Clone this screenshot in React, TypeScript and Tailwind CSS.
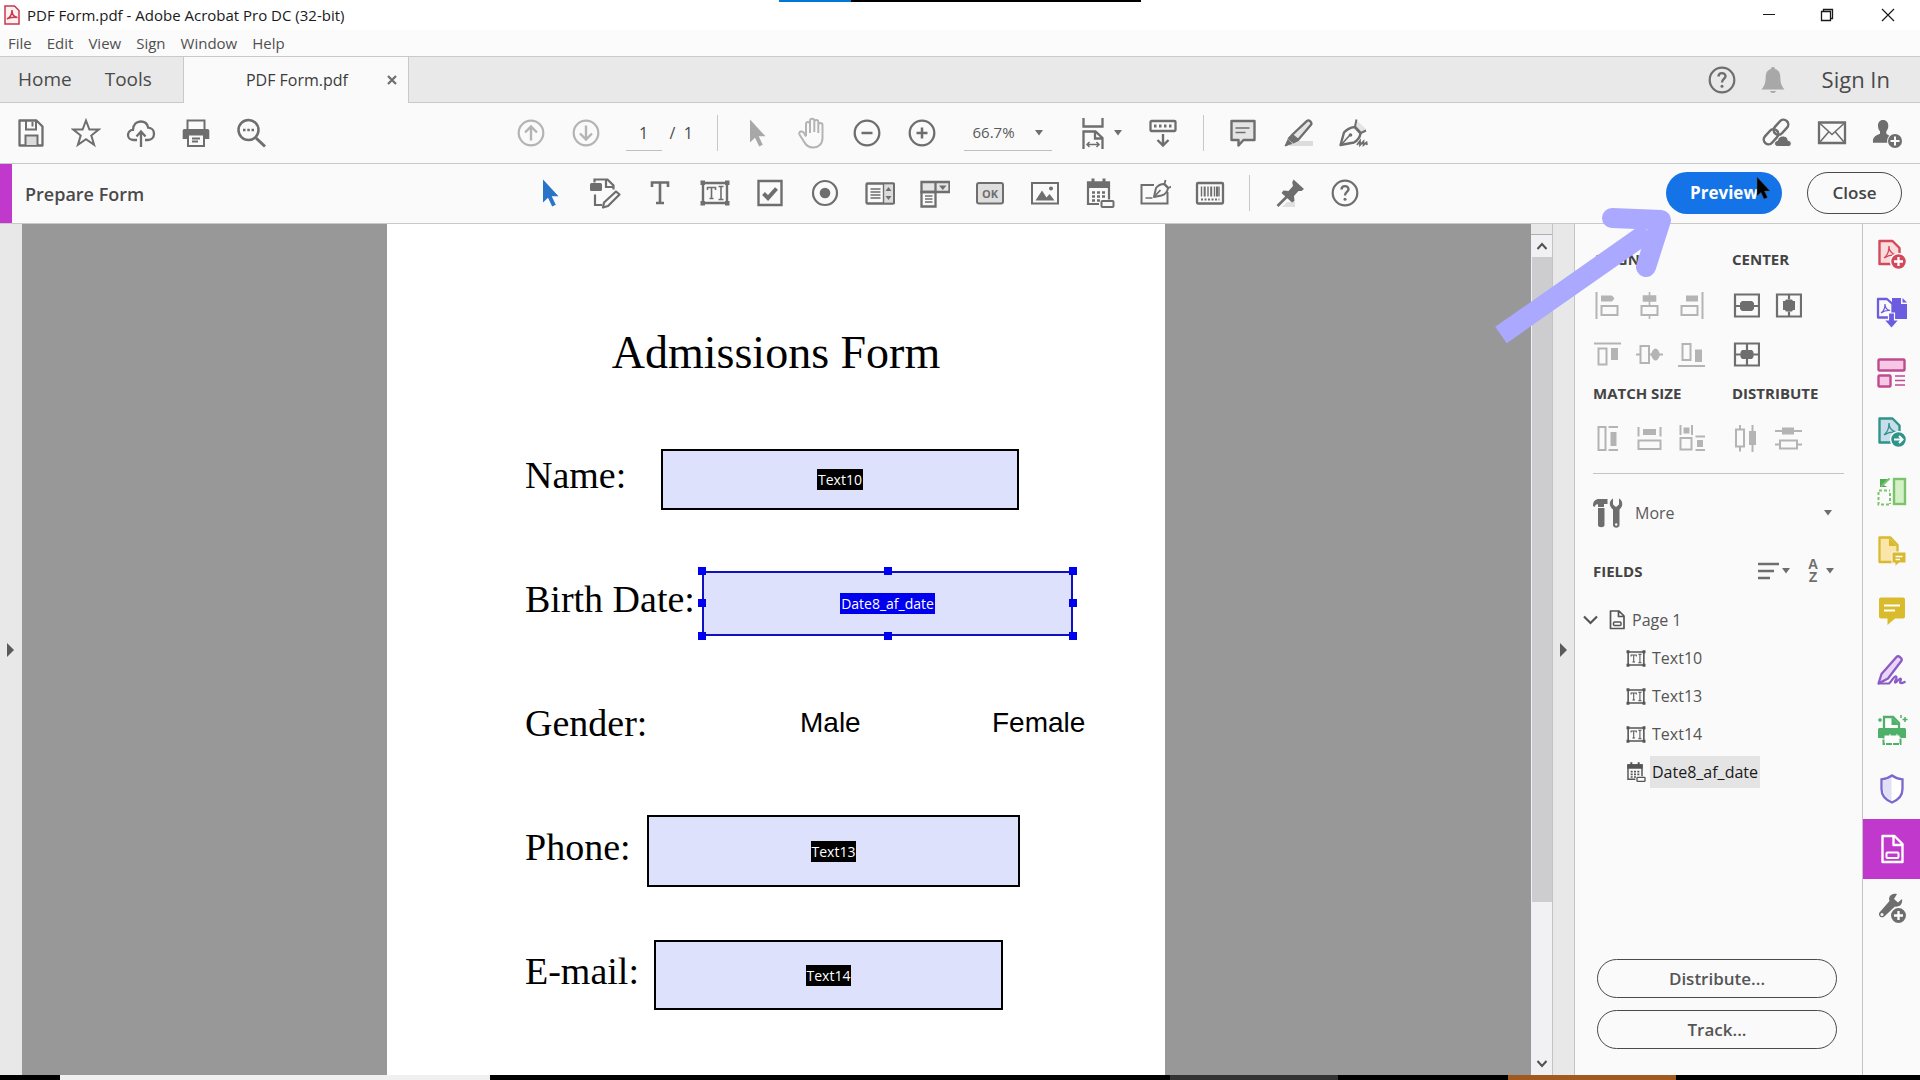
import React from 'react';

type SvgProps = { w?: number; h?: number; className?: string; children: React.ReactNode };

function Svg({ w = 30, h = 30, className = '', children }: SvgProps) {
  return (
    <svg
      width={w}
      height={h}
      viewBox={`0 0 ${w} ${h}`}
      fill="none"
      stroke="currentColor"
      strokeWidth={2}
      className={`shrink-0 ${className}`}
      aria-hidden="true"
    >
      {children}
    </svg>
  );
}

/* ---------- Main toolbar icons ---------- */

const SaveIcon = () => (
  <Svg>
    <path d="M3.500 2.500h17l6 6V27.500h-23z" strokeLinejoin="round" strokeWidth={2.300} />
    <path d="M10 2v9.500h10V2M16.500 4v4.500" />
    <path d="M9.500 27v-9.500h12V27" fill="#dcdcdc" />
  </Svg>
);

const StarIcon = () => (
  <Svg>
    <path d="M15 2.500l3.400 9h9.300l-7.400 6 2.800 9.300L15 21.200l-8.100 5.600 2.800-9.300-7.400-6h9.300z" />
  </Svg>
);

const CloudUpIcon = () => (
  <Svg>
    <path d="M11 22H7.500C4 22 2 19.700 2 17c0-2.800 2-5 5-5.200C7.300 6.500 10.500 3.500 14.700 3.500c4 0 6.800 2.500 7.500 6.200 3.500.2 5.800 2.700 5.800 6 0 3.600-2.500 6.300-6 6.300h-3" strokeWidth={2.300} />
    <path d="M15 29V14M10.500 18.500 15 13.500l4.500 5" strokeWidth={2.300} />
  </Svg>
);

const PrintIcon = () => (
  <Svg>
    <path d="M6.500 11V2.500h17V11" />
    <path d="M3.500 11h23c1 0 1.800.8 1.800 1.800V21h-5v-5H6.700v5h-5v-8.200c0-1 .8-1.800 1.800-1.800z" fill="currentColor" stroke="none" />
    <path d="M7 16.500h16V28H7zM11 20.500h8M11 23.500h6" />
  </Svg>
);

const SearchDotsIcon = () => (
  <Svg>
    <circle cx="12.500" cy="12" r="10" strokeWidth={2.500} />
    <path d="M20 20l9 8.500" strokeWidth={3} />
    <path d="M7 12h2.500M11.300 12h2.500M15.500 12H18" strokeWidth={2.500} />
  </Svg>
);

const PageUpIcon = () => (
  <Svg>
    <circle cx="15" cy="15" r="12.300" strokeWidth={2.200} />
    <path d="M15 22.500V8.500M9 14.500l6-6 6 6" strokeWidth={2.400} />
  </Svg>
);

const PageDownIcon = () => (
  <Svg>
    <circle cx="15" cy="15" r="12.300" strokeWidth={2.200} />
    <path d="M15 7.500v14M9 15.500l6 6 6-6" strokeWidth={2.400} />
  </Svg>
);

const ArrowCursorIcon = () => (
  <Svg>
    <path d="M8 1.500v23l5-4.800 4.200 8.800 3.600-1.700-4.100-8.500h6.800z" fill="currentColor" stroke="none" />
  </Svg>
);

const HandIcon = () => (
  <Svg w={32} h={34}>
    <path
      d="M10 20V8c0-2.800 4-2.800 4 0v9M14 16V5c0-3 4.300-3 4.300 0v11M18.300 16V6c0-2.800 4-2.800 4 0v11M22.300 17V9c0-2.800 4.200-2.800 4.200 0v13c0 6-4 9.500-9.300 9.500-5 0-7.300-2-9.300-6L3.500 18.500c-1.300-3 2.800-4.300 4.500-1.500l2 3.500"
      strokeLinejoin="round"
    />
  </Svg>
);

const ZoomOutIcon = () => (
  <Svg>
    <circle cx="15" cy="15" r="12.300" strokeWidth={2.300} />
    <path d="M9.500 15h11" strokeWidth={2.500} />
  </Svg>
);

const ZoomInIcon = () => (
  <Svg>
    <circle cx="15" cy="15" r="12.300" strokeWidth={2.300} />
    <path d="M9.500 15h11M15 9.500v11" strokeWidth={2.500} />
  </Svg>
);

const Caret = () => (
  <Svg w={8} h={6}>
    <path d="M0 0h8L4 5.500z" fill="currentColor" stroke="none" />
  </Svg>
);

const FitWidthIcon = () => (
  <Svg w={24} h={34}>
    <path d="M2.500 2v8.500h19V2M2.500 33V15.500h12l7 6.500v11M14 16v6.500h7.500" strokeWidth={2.300} />
    <path d="M6 28.500h12M8.500 26 6 28.500 8.500 31M15.500 26l2.500 2.500-2.500 2.500" strokeWidth={1.500} />
  </Svg>
);

const KeyboardDownIcon = () => (
  <Svg>
    <rect x="2.500" y="3" width="25" height="10" rx="1" strokeWidth={2.300} />
    <path d="M6 8h2.500M11 8h2.500M16 8h2.500M21 8h2.500" strokeWidth={3} />
    <path d="M15 16v11M9.500 22l5.500 5.500 5.500-5.500" strokeWidth={2.400} />
  </Svg>
);

const CommentIcon = () => (
  <Svg>
    <path d="M3.500 3h23v19H15.500l-5 5.500V22h-7z" fill="#e4e4e4" strokeWidth={2.400} strokeLinejoin="round" />
    <path d="M7.500 10h14M7.500 14.500h10" strokeWidth={1.600} />
  </Svg>
);

const HighlighterIcon = () => (
  <Svg>
    <path d="M12 23h18v5H6z" fill="#dcdcdc" stroke="none" />
    <path d="M9 17 24 2.800c2-1.500 5.500 1.500 4 4L15 22z" fill="#e4e4e4" strokeWidth={2.300} strokeLinejoin="round" />
    <path d="M7.500 17.500l7 5.500-4 2-5.500-4.500zM5 21.500l4 4L2 28z" fill="currentColor" stroke="currentColor" strokeWidth={1} />
  </Svg>
);

const FountainPenIcon = () => (
  <Svg>
    <path d="M2.500 27 6 14.500C9 11 12.500 9.500 16.500 9l6 6.500c-.7 4-3 7-6.500 9z" strokeWidth={2.400} strokeLinejoin="round" />
    <path d="M17 9l2.500-6 9 8.500-6 3.500z" fill="#e4e4e4" stroke="none" />
    <path d="M18.500 1.500 17 8.500l6 6.500 5-2.500" strokeWidth={2} />
    <path d="M3 27l8.500-9.500" strokeWidth={1.600} />
    <circle cx="12.500" cy="17" r="1.800" fill="currentColor" stroke="none" />
    <path d="M19 27l3-4v4l3.500-3.500V27l3-2.500.5 2.500" strokeWidth={1.800} />
  </Svg>
);

const LinkCloudIcon = () => (
  <Svg w={32}>
    <rect x="11.500" y="4.500" width="17" height="9.500" rx="4.700" transform="rotate(-48 20 9.300)" strokeWidth={2.500} />
    <rect x="1.500" y="14" width="17" height="9.500" rx="4.700" transform="rotate(-48 10 18.700)" strokeWidth={2.500} />
    <path d="M17 28.500c-4.500 0-4.500-5.500-.5-6 .5-3 3-4.800 6-4.500 3 .3 4.300 2 4.700 4.500 4 .3 4 6 0 6z" fill="currentColor" stroke="#fafafa" strokeWidth={1} />
  </Svg>
);

const MailIcon = () => (
  <Svg>
    <path d="M2 4.500h26v20.500H2z" strokeWidth={2.300} />
    <path d="M3 5.500l12 11 12-11M3 24l9-10.500M27 24l-9-10.500" strokeWidth={1.600} />
  </Svg>
);

const AddPersonIcon = () => (
  <Svg w={32}>
    <path d="M12 2c3.500 0 5.300 2.500 5.300 5.800 0 2.500-1 4.200-2 5.500v2.500l3 2c-2 2-2.500 4.500-2 7H2c-.5-5.500 2-7 7-9v-2.500c-1.200-1.300-2-3-2-5.500C7 4.500 8.600 2 12 2z" fill="currentColor" stroke="none" />
    <circle cx="24" cy="23" r="7" fill="currentColor" stroke="none" />
    <path d="M24 18.500v9M19.500 23h9" stroke="#fafafa" />
  </Svg>
);

const HelpIcon = () => (
  <Svg>
    <circle cx="15" cy="15" r="12.300" strokeWidth={2.200} />
    <path d="M11.500 11.500c0-4.500 7-4.500 7-.3 0 2.800-3.500 2.800-3.500 6.300" strokeWidth={2.400} />
    <circle cx="15" cy="21.300" r="1.500" fill="currentColor" stroke="none" />
  </Svg>
);

const BellIcon = () => (
  <Svg>
    <path d="M15 2c1.500 0 2 .8 2 2 4 1.200 5.200 4 5.300 8 .2 5 .7 8.500 4.200 12.500h-23C7 20.500 7.500 17 7.700 12c.1-4 1.300-6.800 5.300-8 0-1.200.5-2 2-2zM12 26h6c-.5 2.500-5.500 2.500-6 0z" fill="currentColor" stroke="none" />
  </Svg>
);

/* ---------- Form toolbar icons ---------- */

const EditFormIcon = () => (
  <Svg w={32} h={32}>
    <rect x="1" y="6" width="12" height="8" rx="1.500" fill="currentColor" stroke="none" />
    <path d="M5.500 5.500v-3h13l6 6v4M17 3v7h7M6 17.500V28h7" strokeWidth={2.200} />
    <path d="M15 25.500 27 14.500l3.500 3L19 29l-5 1.500z" strokeWidth={2.200} strokeLinejoin="round" />
  </Svg>
);

const TextIcon = () => (
  <Svg>
    <path d="M7 9V4.500h16V9M15 4.500v20M11 25h8" strokeWidth={2.600} />
  </Svg>
);

const TextFieldIcon = ({ small = false }: { small?: boolean }) => (
  <svg
    width={small ? 20 : 30}
    height={small ? 17 : 26}
    viewBox="0 0 30 26"
    fill="none"
    stroke="currentColor"
    strokeWidth={2}
    aria-hidden="true"
    className="shrink-0"
  >
    <path d="M3 3h24v20H3z" strokeWidth={2.400} />
    <path d="M.5.500h4.500v4.500H.5zM25 .5h4.500v4.500H25zM.5 21h4.500v4.500H.5zM25 21h4.500v4.500H25z" fill="currentColor" stroke="none" />
    <path d="M7.500 10V7.500h8V10M11.500 7.500v11M9.500 18.500h4M18.500 6.500h5M21 6.500v13M18.500 19.500h5" strokeWidth={1.600} />
  </svg>
);

const CheckboxIcon = () => (
  <Svg>
    <path d="M3.500 3h23v24h-23z" strokeWidth={2.400} />
    <path d="M8.500 15.500l4.500 4.500 8.500-9.500" strokeWidth={4} />
  </Svg>
);

const RadioIcon = () => (
  <Svg>
    <circle cx="15" cy="15" r="12" strokeWidth={2.200} />
    <circle cx="15" cy="15" r="5.300" fill="currentColor" stroke="none" />
  </Svg>
);

const ListBoxIcon = () => (
  <Svg>
    <rect x="1.500" y="5.500" width="27.500" height="20" rx="1" strokeWidth={2.300} />
    <path d="M18.500 6.500H28v18h-9.500z" fill="#dcdcdc" stroke="none" />
    <path d="M18.500 6v19M5.500 11h10M5.500 14h10M5.500 17h10M5.500 20h10" strokeWidth={1.400} />
    <path d="M20.500 13l3-4 3 4zM20.500 18l3 4 3-4z" fill="currentColor" stroke="none" />
  </Svg>
);

const ComboIcon = () => (
  <Svg>
    <path d="M1.500 4h28v10h-28z" fill="#e4e4e4" strokeWidth={2.300} />
    <path d="M1.500 14h14v14.500h-14zM15.500 4v10" strokeWidth={2.300} />
    <path d="M5 18h7.500M5 21h7.500M5 24h7.500" strokeWidth={1.300} />
    <path d="M19 7.500h7.500L22.800 12z" fill="currentColor" stroke="none" />
  </Svg>
);

const ButtonIcon = () => (
  <Svg>
    <rect x="2" y="5" width="26" height="20.500" rx="2" fill="#dedede" />
    <text x="15" y="19.500" textAnchor="middle" fontFamily="Open Sans, sans-serif" fontWeight="700" fontSize="11" fill="currentColor" stroke="none">
      OK
    </text>
  </Svg>
);

const ImageIcon = () => (
  <Svg>
    <path d="M2 5h26v20.500H2z" />
    <path d="M5.500 22.500 12 12.500l4.500 7 3-3.500 5 6.500z" fill="currentColor" stroke="none" />
    <circle cx="21" cy="10.500" r="2" fill="currentColor" stroke="none" />
  </Svg>
);

const DateIcon = ({ small = false }: { small?: boolean }) => (
  <svg
    width={small ? 20 : 30}
    height={small ? 20 : 30}
    viewBox="0 0 30 30"
    fill="none"
    stroke="currentColor"
    strokeWidth={2}
    aria-hidden="true"
    className="shrink-0"
  >
    <path d="M14 26H3V4.500h21v17" strokeWidth={2.200} />
    <path d="M2 3.500h23v6.500H2zM6.500.5h3v4h-3zM17.500.500h3v4h-3z" fill="currentColor" stroke="none" />
    <path d="M7 14.500h3M12 14.500h3M17 14.500h3M7 18.500h3M12 18.500h3M17 18.500h3M7 22.500h3M12 22.500h3" strokeWidth={2.500} />
    <rect x="16.500" y="23" width="12" height="6" rx="1" />
  </svg>
);

const SignatureIcon = () => (
  <Svg w={32}>
    <path d="M15 7H2.500v18.500h26V14" />
    <path d="M6.500 20h7" strokeWidth={1.500} />
    <path d="M15 19l2-9c2-2.500 5-4 8-4l4 4c-.5 4-3 6.500-6.500 7.500z" strokeLinejoin="round" />
    <path d="M26.500 2 25.500 6l4 4 3-1.500M15.500 18.500l6-6.500" strokeWidth={1.800} />
  </Svg>
);

const BarcodeIcon = () => (
  <Svg>
    <rect x="2" y="5" width="26" height="20.500" rx="1" strokeWidth={2.300} />
    <path d="M6.500 8.500v10M13 8.500v10M19.500 8.500v10M24 8.500v10" strokeWidth={1.400} />
    <path d="M9.700 8.500v10M16.200 8.500v10M22 8.500v10" strokeWidth={2} />
    <path d="M6 21.500h18.500" strokeWidth={2} strokeDasharray="2 1.500" />
  </Svg>
);

const PinIcon = () => (
  <Svg>
    <path d="M12 24h8v5H7z" fill="#e0e0e0" stroke="none" />
    <path d="M18.500 1.500 29 11l-2.500 2h-3l-4.500 5 .5 5-2.500 1.500L6.500 15 8.500 12.500l5 .5 4.500-5-.8-3.500z" fill="currentColor" stroke="none" />
    <path d="M12 18.500 2.500 28" strokeWidth={2.600} />
  </Svg>
);

/* ---------- Align panel icons ---------- */

const AlignLeftIcon = () => (
  <Svg w={27} h={27}>
    <path d="M2.500 0v27" />
    <path d="M7 3.500h11l2.500 3-2.500 3H7z" fill="currentColor" stroke="none" />
    <path d="M7.500 14h16v9h-16z" />
  </Svg>
);

const AlignCenterIcon = () => (
  <Svg w={27} h={27}>
    <path d="M13.500 0v14M13.500 23v4M7.500 4h12v5h-12z" fill="currentColor" strokeWidth={1.600} />
    <path d="M5.500 14h16v9h-16z" />
  </Svg>
);

const AlignRightIcon = () => (
  <Svg w={27} h={27}>
    <path d="M24.500 0v27" />
    <path d="M8 3.500h12v6H8z" fill="currentColor" stroke="none" />
    <path d="M3.500 14h16v9h-16z" />
  </Svg>
);

const AlignTopIcon = () => (
  <Svg w={27} h={27}>
    <path d="M0 2.500h27M4.500 7.500h8v16h-8z" />
    <path d="M17 7h7v12h-7z" fill="currentColor" stroke="none" />
  </Svg>
);

const AlignMiddleIcon = () => (
  <Svg w={27} h={27}>
    <path d="M0 13.500h4.500M13 13.500h14M4.500 5h8.500v17H4.500z" />
    <path d="M15 13.500c2-8 7-8 9 0-2 8-7 8-9 0z" fill="currentColor" stroke="none" />
  </Svg>
);

const AlignBottomIcon = () => (
  <Svg w={27} h={27}>
    <path d="M0 25h27M4.500 3h8v16h-8z" />
    <path d="M17 8.500h7V21h-7z" fill="currentColor" stroke="none" />
  </Svg>
);

const CenterVerticalIcon = () => (
  <Svg w={27} h={27}>
    <path d="M2 2.500h24v22H2zM2 14h6M20 14h6" strokeWidth={2.200} />
    <path d="M9 9h10l2 2v6l-2 2H9l-2-2v-6z" fill="currentColor" stroke="none" />
  </Svg>
);

const CenterHorizontalIcon = () => (
  <Svg w={27} h={27}>
    <path d="M2 2.500h24v22H2zM14 2.500v5M14 19.500v5" strokeWidth={2.200} />
    <path d="M8 9h2l1-1.500h6L18 9h2v9h-2l-1 1.500h-6L10 18H8z" fill="currentColor" stroke="none" />
  </Svg>
);

const CenterBothIcon = () => (
  <Svg w={27} h={27}>
    <path d="M2 2.500h24v22H2zM2 13.500h24M14 2.500v22" strokeWidth={2.200} />
    <path d="M9 9h10l1.500 2v5L19 18H9l-1.500-2v-5z" fill="currentColor" stroke="none" />
  </Svg>
);

const MatchHeightIcon = () => (
  <Svg w={27} h={27}>
    <path d="M4.500 2h7v23h-7zM14.500 2H24M14.500 25H24" />
    <path d="M16.500 7h6v14h-6z" fill="currentColor" stroke="none" />
  </Svg>
);

const MatchWidthIcon = () => (
  <Svg w={27} h={27}>
    <path d="M2.500 2v9.500M24.500 2v9.500M2.500 15.500h22v8.500h-22z" />
    <path d="M7 4h13v6H7z" fill="currentColor" stroke="none" />
  </Svg>
);

const MatchBothIcon = () => (
  <Svg w={27} h={27}>
    <path d="M2.500 0v10M14 0v10M2.500 13h11v11.500h-11zM17.500 11.500H27M17.500 25H27" />
    <path d="M5.500 2.500h6v6h-6zM19 15h6v7h-6z" fill="currentColor" stroke="none" />
  </Svg>
);

const DistributeHorizontalIcon = () => (
  <Svg w={27} h={27}>
    <path d="M7 0v4M7 22v4.500M3 4.500h8v17H3zM19.500 0v27" />
    <path d="M16 6h7v14h-7z" fill="currentColor" stroke="none" />
  </Svg>
);

const DistributeVerticalIcon = () => (
  <Svg w={27} h={27}>
    <path d="M0 6h27M0 19.500h5M22 19.500h5M5 15.500h17v8H5z" />
    <path d="M7 2.500h12v7H7z" fill="currentColor" stroke="none" />
  </Svg>
);

const ToolsIcon = () => (
  <Svg w={30} h={30}>
    <path d="M0 8c0-5 2.500-7 6-7h8.500v5H11v3H5V6.500C3.500 6 2 7 2 9z" fill="currentColor" stroke="none" />
    <path d="M5 10h6.500v17c0 3-6.500 3-6.500 0z" fill="currentColor" stroke="none" />
    <path d="M20 .5v6l3 2.500 3-2.500v-6c4 2 4.500 8 .5 11V27c0 3.500-6.500 3.500-6.500 0V11.500c-4.500-3-4-9 0-11z" fill="currentColor" stroke="none" />
    <circle cx="23.200" cy="26.500" r="1.200" fill="#fafafa" stroke="none" />
  </Svg>
);

const OrderIcon = () => (
  <Svg w={22} h={18}>
    <path d="M0 2h21M0 9h16M0 16h12" strokeWidth={2.400} />
  </Svg>
);

const PageFormIcon = () => (
  <Svg w={16} h={20}>
    <path d="M1.500 1h8.500l5 5v12.500H1.500zM9.500 1.500V6.500h5" strokeLinejoin="round" strokeWidth={1.700} />
    <rect x="4.500" y="12" width="7.500" height="3.500" rx="1" strokeWidth={1.500} />
  </Svg>
);

/* ---------- Right rail icons ---------- */

const CreatePdfIcon = () => (
  <Svg w={32} h={32} className="text-[#d14a5b]">
    <path d="M3.500 3h13l7 7v16h-20z" fill="#fbdcdc" strokeWidth={2.400} strokeLinejoin="round" />
    <path d="M8 20c4-3 5-7 5-12 0 5 3 8 7 9-4-.5-8 .5-12 3z" strokeWidth={1.300} />
    <circle cx="22.500" cy="23.500" r="8" fill="currentColor" stroke="#fafafa" strokeWidth={1.500} />
    <path d="M22.500 19v9M18 23.500h9" stroke="#fff" strokeWidth={2.300} />
  </Svg>
);

const CombineIcon = () => (
  <Svg w={32} h={32} className="text-[#6c5ce0]">
    <path d="M16 1h9v6h6v15H16z" fill="currentColor" stroke="none" />
    <path d="M26.500 1 31 5.500h-4.500z" fill="currentColor" stroke="none" />
    <path d="M2 2h9l5.500 5v13.500H2z" fill="#fafafa" strokeWidth={2.300} strokeLinejoin="round" />
    <path d="M5 16c3-2 4-5 4-9 0 3.500 2 6 5 6.500-3-.3-6 .5-9 2.500z" strokeWidth={1.200} />
    <path d="M12.500 16h6v7h4.500l-7.500 8.500L8 23h4.500z" fill="currentColor" stroke="#fafafa" strokeWidth={1.200} />
  </Svg>
);

const OrganizeIcon = () => (
  <Svg w={32} h={32} className="text-[#c04a8e]">
    <rect x="2.500" y="2.500" width="26" height="11" rx="1" fill="#f6c8e6" strokeWidth={2.400} />
    <rect x="2.500" y="18.500" width="12" height="11" rx="1" fill="#f6c8e6" strokeWidth={2.400} />
    <path d="M19 19h10M19 23.500h10M19 28h10" strokeWidth={1.700} />
  </Svg>
);

const ExportIcon = () => (
  <Svg w={32} h={32} className="text-[#2f9488]">
    <path d="M3.500 2.500h13l7 7v17h-20z" fill="#c8dcec" strokeWidth={2.400} strokeLinejoin="round" />
    <path d="M8 19c4-3 5-7 5-12 0 5 3 8 7 9-4-.5-8 .5-12 3z" strokeWidth={1.300} />
    <circle cx="22.500" cy="23.500" r="8" fill="currentColor" stroke="#fafafa" strokeWidth={1.500} />
    <path d="M18 23.500h8M23 20l3.500 3.500L23 27" stroke="#fff" strokeWidth={2} />
  </Svg>
);

const CropPagesIcon = () => (
  <Svg w={32} h={32} className="text-[#7cc36c]">
    <rect x="18" y="3" width="11" height="25" fill="#d3f0c6" strokeWidth={2.400} />
    <path d="M3 14.500h11M2.500 16v12.500H14M14 17v11" strokeDasharray="3 2" />
    <path d="M4 3h8L9.500 5.500 6.500 8.500l5 2.500H4z" fill="#4fae55" stroke="none" />
    <path d="M5 10.500 13.500 2.500" stroke="#7cc36c" />
  </Svg>
);

const CommentsPageIcon = () => (
  <Svg w={32} h={32} className="text-[#d9b92f]">
    <path d="M3.500 2.500h11l7 7.500v17h-18z" fill="#fae6a8" strokeWidth={2.300} strokeLinejoin="round" />
    <path d="M13 3v8h8z" fill="currentColor" stroke="none" />
    <path d="M16 17h14v11h-7l-4 3.500V28h-3z" fill="currentColor" stroke="#fafafa" strokeWidth={1} />
    <path d="M19.500 21.500h7M19.500 24.500h4.500" stroke="#fff" strokeWidth={1.300} />
  </Svg>
);

const CommentSolidIcon = () => (
  <Svg w={32} h={32} className="text-[#d9bb2c]">
    <path d="M5 2.500h22a2 2 0 0 1 2 2v17a2 2 0 0 1-2 2h-8L11.500 30v-6.500H5a2 2 0 0 1-2-2v-17a2 2 0 0 1 2-2z" fill="currentColor" stroke="none" />
    <path d="M8 10.500h16M8 15.500h11" stroke="#fff" strokeWidth={2.200} />
  </Svg>
);

const SignPenIcon = () => (
  <Svg w={32} h={32} className="text-[#8a5cc4]">
    <path d="M2.500 29.500 5.500 20 20.500 3c2-2 6.500 1.500 4.800 4L12 24.500z" fill="#e9d6fa" strokeWidth={2.300} strokeLinejoin="round" />
    <path d="M2.500 29.500H13c3-2 5-8 7-7s-2 5-1 6 4-4.500 5.500-4-1.500 4 0 4.500 3-.5 5-1.500" strokeWidth={2.200} />
  </Svg>
);

const ScanIcon = () => (
  <Svg w={32} h={32} className="text-[#4fb069]">
    <path d="M8 16V3h9l6 6v7" fill="#fff" strokeWidth={2.300} />
    <path d="M15.500 3v8h8z" fill="currentColor" stroke="none" />
    <path d="M2 16c0-1.500.5-2 2-2h24c1.500 0 2 .5 2 2v8h-5v-4H7v4H2z" fill="currentColor" stroke="none" />
    <path d="M7.500 20.500h17V30h-17z" fill="#fff" strokeWidth={2} strokeDasharray="6 1" />
    <path d="M4 4v4M2 6h4M25 1v3M29 3v5M26.500 5.500h5" strokeWidth={1.500} />
  </Svg>
);

const ShieldIcon = () => (
  <Svg w={32} h={32} className="text-[#7b68cf]">
    <path d="M16 2.500c3 2.300 6.500 3.500 10.500 3.800V16c0 6.500-4.500 11-10.500 13.500C10 27 5.500 22.500 5.500 16V6.300C9.500 6 13 4.800 16 2.500z" fill="#fff" strokeWidth={2.300} />
    <path d="M15.500 4.500v23C10.500 25 7 21 7 16V7.500c3-.3 6-1.200 8.500-3z" fill="#dfe0f8" stroke="none" />
  </Svg>
);

const PrepareFormIcon = () => (
  <Svg w={32} h={32} className="text-white">
    <path d="M6.500 3h12l8 8v18h-20zM17.500 3.500V12h9" strokeWidth={2.400} strokeLinejoin="round" />
    <rect x="10.500" y="19.500" width="12" height="5.500" rx="1" />
  </Svg>
);

const MoreToolsIcon = () => (
  <Svg w={32} h={32} className="text-[#6e6e6e]">
    <path d="M21 2c-6-1.500-9 3-7.500 7L3.500 20.500c-2 3 2 6.500 4.800 4L19 14.500c4.500 1 8-2.500 7-7.500l-4 3.500-4-3.500z" fill="currentColor" stroke="none" />
    <circle cx="6" cy="22.500" r="1.500" fill="#fafafa" stroke="none" />
    <circle cx="22.500" cy="23.500" r="8.200" fill="currentColor" stroke="#fafafa" strokeWidth={1.500} />
    <path d="M22.500 19v9M18 23.500h9" stroke="#fff" strokeWidth={2.300} />
  </Svg>
);

/* ---------- Building blocks ---------- */

function ToolButton({ label, className = '', children }: { label: string; className?: string; children: React.ReactNode }) {
  return (
    <button type="button" aria-label={label} className={`flex h-10 w-[55px] shrink-0 items-center justify-center ${className}`}>
      {children}
    </button>
  );
}

const Divider = () => <div className="h-9 w-px shrink-0 bg-[#c8c8c8]" />;

const MENUS = ['File', 'Edit', 'View', 'Sign', 'Window', 'Help'];

const FORM_TOOLS = [
  { label: 'Edit form', icon: <EditFormIcon /> },
  { label: 'Add text', icon: <TextIcon /> },
  { label: 'Text field', icon: <TextFieldIcon /> },
  { label: 'Check box', icon: <CheckboxIcon /> },
  { label: 'Radio button', icon: <RadioIcon /> },
  { label: 'List of choices', icon: <ListBoxIcon /> },
  { label: 'Dropdown', icon: <ComboIcon /> },
  { label: 'Button', icon: <ButtonIcon /> },
  { label: 'Image field', icon: <ImageIcon /> },
  { label: 'Date field', icon: <DateIcon /> },
  { label: 'Signature', icon: <SignatureIcon /> },
  { label: 'Barcode', icon: <BarcodeIcon /> },
];

const RAIL = [
  { label: 'Create PDF', icon: <CreatePdfIcon /> },
  { label: 'Combine files', icon: <CombineIcon /> },
  { label: 'Organize pages', icon: <OrganizeIcon /> },
  { label: 'Export PDF', icon: <ExportIcon /> },
  { label: 'Crop pages', icon: <CropPagesIcon /> },
  { label: 'Send for comments', icon: <CommentsPageIcon /> },
  { label: 'Comment', icon: <CommentSolidIcon /> },
  { label: 'Fill and sign', icon: <SignPenIcon /> },
  { label: 'Scan and OCR', icon: <ScanIcon /> },
  { label: 'Protect', icon: <ShieldIcon /> },
  { label: 'Prepare form', icon: <PrepareFormIcon />, active: true },
  { label: 'More tools', icon: <MoreToolsIcon /> },
];

const TREE = [
  { name: 'Text10', date: false },
  { name: 'Text13', date: false },
  { name: 'Text14', date: false },
  { name: 'Date8_af_date', date: true },
];

const HANDLES = [
  '-left-1 -top-1',
  'left-1/2 -ml-1 -top-1',
  '-right-1 -top-1',
  '-left-1 top-1/2 -mt-1',
  '-right-1 top-1/2 -mt-1',
  '-left-1 -bottom-1',
  'left-1/2 -ml-1 -bottom-1',
  '-right-1 -bottom-1',
];

interface FieldRowProps {
  label: string;
  name: string;
  labelWidth: string;
  boxSize: string;
  selected?: boolean;
}

function FieldRow({ label, name, labelWidth, boxSize, selected = false }: FieldRowProps) {
  return (
    <div className="flex h-[124px] items-center">
      <label htmlFor={name} className={`shrink-0 whitespace-nowrap ${labelWidth}`}>
        {label}
      </label>
      <div className={`relative mt-2 shrink-0 font-['Open_Sans',sans-serif] ${boxSize}`}>
        <input
          id={name}
          type="text"
          readOnly
          className={`block h-full w-full border-2 bg-[#dee1fc] ${selected ? 'border-[#1010c0]' : 'border-black'}`}
        />
        <span className="pointer-events-none absolute inset-0 flex items-center justify-center">
          <span className={`px-px text-sm leading-[21px] text-white ${selected ? 'bg-[#0000f0]' : 'bg-black'}`}>{name}</span>
        </span>
        {selected && HANDLES.map((pos) => <span key={pos} className={`absolute h-2 w-2 bg-[#0000f0] ${pos}`} />)}
      </div>
    </div>
  );
}

function TitleBar() {
  return (
    <header className="relative bg-white">
      <div className="absolute left-[779px] top-0 flex h-0.5 w-[362px]">
        <div className="w-[72px] bg-[#0078d7]" />
        <div className="flex-1 bg-black" />
      </div>
      <div className="flex h-[30px] items-center justify-between">
        <div className="flex items-center gap-[7px] pl-1">
          <Svg w={16} h={20} className="text-[#c8384e]">
            <path d="M1 1h9.500L15 5.500V19H1z" strokeWidth={1.500} fill="#fdf0f0" />
            <path d="M3 14c4-2 5-5 5-9 0 4 2 7 5.500 7.500C10 12 6 12 3 14z" strokeWidth={1.500} />
          </Svg>
          <h1 className="text-[15px] leading-5 text-[#1a1a1a]">PDF Form.pdf - Adobe Acrobat Pro DC (32-bit)</h1>
        </div>
        <div className="flex text-[#1a1a1a]">
          <button type="button" aria-label="Minimize" className="flex h-7 w-[58px] items-center justify-center">
            <Svg w={12} h={12}><path d="M0 5.500h12" strokeWidth={1} /></Svg>
          </button>
          <button type="button" aria-label="Restore" className="flex h-7 w-[58px] items-center justify-center">
            <Svg w={14} h={14}><path d="M1.500 3.500h9v9h-9zM3.500 3.500v-2h9v9h-2" strokeWidth={1.300} /></Svg>
          </button>
          <button type="button" aria-label="Close window" className="flex h-7 w-16 items-center justify-center">
            <Svg w={14} h={14}><path d="M1 1l12 12M13 1 1 13" strokeWidth={1.200} /></Svg>
          </button>
        </div>
      </div>
      <nav className="flex h-[26px] items-center gap-[15px] bg-[#fbfbfb] pl-2 text-[15px] leading-5 text-[#505050]">
        {MENUS.map((m) => (
          <button key={m} type="button">{m}</button>
        ))}
      </nav>
    </header>
  );
}

function TabBar() {
  return (
    <div className="flex h-[47px] border-y border-[#c9c9c9] bg-[#e9e9e9] text-[#4a4a4a]">
      <div className="flex w-[183px] shrink-0 items-center gap-[33px] pl-[18px] text-[19px]">
        <button type="button">Home</button>
        <button type="button">Tools</button>
      </div>
      <div className="-mb-px flex w-[226px] shrink-0 items-center justify-end border-x border-[#c9c9c9] bg-[#fafafa] pr-[11px]">
        <span className="text-base text-[#3c3c3c]">PDF Form.pdf</span>
        <button type="button" aria-label="Close tab" className="ml-[39px] text-[#6e6e6e]">
          <Svg w={10} h={10}><path d="M1 1l8 8M9 1 1 9" strokeWidth={2.200} /></Svg>
        </button>
      </div>
      <div className="flex flex-1 items-center justify-end pr-[30px]">
        <button type="button" aria-label="Help" className="text-[#6e6e6e]"><HelpIcon /></button>
        <button type="button" aria-label="Notifications" className="ml-[21px] text-[#a8a8a8]"><BellIcon /></button>
        <button type="button" className="ml-[34px] text-[22px]">Sign In</button>
      </div>
    </div>
  );
}

function MainToolbar() {
  return (
    <div className="grid h-[61px] grid-cols-[1fr_auto_1fr] items-center border-b border-[#c9c9c9] bg-[#fafafa] text-[#6e6e6e]">
      <div className="flex pl-[3px]">
        <ToolButton label="Save"><SaveIcon /></ToolButton>
        <ToolButton label="Star"><StarIcon /></ToolButton>
        <ToolButton label="Upload"><CloudUpIcon /></ToolButton>
        <ToolButton label="Print"><PrintIcon /></ToolButton>
        <ToolButton label="Find"><SearchDotsIcon /></ToolButton>
      </div>
      <div className="flex items-center pr-9">
        <ToolButton label="Previous page" className="text-[#b4b4b4]"><PageUpIcon /></ToolButton>
        <ToolButton label="Next page" className="text-[#b4b4b4]"><PageDownIcon /></ToolButton>
        <div className="ml-3 flex items-center gap-2 text-base text-[#4a4a4a]">
          <input aria-label="Page number" defaultValue="1" className="h-9 w-9 border-b border-[#c0c0c0] bg-transparent text-center" />
          <span className="w-[47px] whitespace-pre">/  1</span>
        </div>
        <Divider />
        <div className="ml-3 flex">
          <ToolButton label="Select" className="text-[#a8a8a8]"><ArrowCursorIcon /></ToolButton>
          <ToolButton label="Pan" className="text-[#b4b4b4]"><HandIcon /></ToolButton>
          <ToolButton label="Zoom out"><ZoomOutIcon /></ToolButton>
          <ToolButton label="Zoom in"><ZoomInIcon /></ToolButton>
        </div>
        <div className="relative ml-3.5">
          <select aria-label="Zoom level" className="h-9 w-[88px] appearance-none border-b border-[#c0c0c0] bg-transparent pl-[9px] text-[15px] text-[#5a5a5a]">
            <option>66.7%</option>
          </select>
          <span className="pointer-events-none absolute inset-y-0 right-[9px] flex items-center"><Caret /></span>
        </div>
        <button type="button" aria-label="Fit width" className="ml-[29px] flex items-center gap-[9px]">
          <FitWidthIcon />
          <Caret />
        </button>
        <ToolButton label="Show keyboard" className="ml-3.5"><KeyboardDownIcon /></ToolButton>
        <div className="ml-3"><Divider /></div>
        <div className="ml-3 flex">
          <ToolButton label="Comment"><CommentIcon /></ToolButton>
          <ToolButton label="Highlight"><HighlighterIcon /></ToolButton>
          <ToolButton label="Sign document"><FountainPenIcon /></ToolButton>
        </div>
      </div>
      <div className="flex justify-end pr-1.5">
        <ToolButton label="Share link"><LinkCloudIcon /></ToolButton>
        <ToolButton label="Email"><MailIcon /></ToolButton>
        <ToolButton label="Add people"><AddPersonIcon /></ToolButton>
      </div>
    </div>
  );
}

function FormToolbar() {
  return (
    <div className="grid h-[60px] grid-cols-[1fr_auto_1fr] items-center border-b border-[#c9c9c9] bg-[#fafafa] text-[#6e6e6e]">
      <div className="flex h-full items-center">
        <div className="h-full w-3 bg-[#c038cc]" />
        <h2 className="pl-[13px] text-lg font-semibold text-[#4a4a4a]">Prepare Form</h2>
      </div>
      <div className="flex items-center pb-px pr-[26px]">
        <ToolButton label="Select object" className="text-[#2a74c8]"><ArrowCursorIcon /></ToolButton>
        {FORM_TOOLS.map((t) => (
          <ToolButton key={t.label} label={t.label}>{t.icon}</ToolButton>
        ))}
        <div className="mx-3"><Divider /></div>
        <ToolButton label="Keep tool selected"><PinIcon /></ToolButton>
        <ToolButton label="Form help"><HelpIcon /></ToolButton>
      </div>
      <div className="flex justify-end gap-[25px] pb-px pr-[18px]">
        <div className="relative">
          <button type="button" className="h-[42px] w-[116px] rounded-full bg-[#1473e6] text-[17px] font-bold text-white">
            Preview
          </button>
          {/* mouse pointer */}
          <svg width="14" height="24" viewBox="0 0 14 24" className="absolute right-3 top-1" aria-hidden="true">
            <path d="M1 1v19l4-3.500L8 23l3.500-1.500-3-6.500H14z" fill="#000" stroke="#555" strokeWidth=".5" />
          </svg>
        </div>
        <button type="button" className="h-[42px] w-[95px] rounded-full border border-[#4a4a4a] text-[17px] font-semibold text-[#444]">
          Close
        </button>
      </div>
    </div>
  );
}

function DocumentPage() {
  return (
    <article className="w-[778px] shrink-0 bg-white pl-[138px] pr-[138px] font-['Liberation_Serif',serif] text-[38px] leading-[44px] text-black">
      <h2 className="flex h-[189px] items-center justify-center whitespace-nowrap pt-[68px] text-[46px]">Admissions Form</h2>
      <FieldRow label="Name:" name="Text10" labelWidth="w-[136px]" boxSize="w-[358px] h-[61px]" />
      <FieldRow label="Birth Date:" name="Date8_af_date" labelWidth="w-[177px]" boxSize="w-[371px] h-[65px]" selected />
      <div className="flex h-[124px] items-center">
        <span className="w-[275px] shrink-0">Gender:</span>
        <span className="w-[192px] shrink-0 font-['Liberation_Sans',sans-serif] text-[28px]">Male</span>
        <span className="font-['Liberation_Sans',sans-serif] text-[28px]">Female</span>
      </div>
      <FieldRow label="Phone:" name="Text13" labelWidth="w-[122px]" boxSize="w-[373px] h-[72px]" />
      <FieldRow label="E-mail:" name="Text14" labelWidth="w-[129px]" boxSize="w-[349px] h-[70px]" />
    </article>
  );
}

function ScrollBar() {
  return (
    <div className="flex w-[22px] shrink-0 flex-col border-r border-[#c4c4c4] bg-[#f1f1f3] text-[#505050]">
      <div className="h-[11px] border-b border-[#b0b0b0] bg-[#e8e8e8]" />
      <button type="button" aria-label="Scroll up" className="flex h-[22px] items-center justify-center">
        <Svg w={12} h={8}><path d="M1.500 7 6 2l4.500 5" /></Svg>
      </button>
      <div className="flex-1">
        <div className="ml-px h-[81%] bg-[#cdcccf]" />
      </div>
      <button type="button" aria-label="Scroll down" className="flex h-[22px] items-center justify-center">
        <Svg w={12} h={8}><path d="M1.500 1 6 6l4.500-5" /></Svg>
      </button>
    </div>
  );
}

const headingClass = 'text-[15px] leading-5 font-bold text-[#444]';

function SidePanel() {
  return (
    <aside className="flex w-[289px] shrink-0 flex-col border-x border-[#c4c4c4] bg-[#fafafa] px-[18px] text-[#6e6e6e]">
      <div className="grid grid-cols-[139px_1fr] pt-[25px]">
        <section>
          <h3 className={headingClass}>ALIGN</h3>
          <div className="grid w-max grid-cols-3 gap-x-[15px] gap-y-[22px] pl-px pt-[23px] text-[#b4b4b4]">
            <AlignLeftIcon />
            <AlignCenterIcon />
            <AlignRightIcon />
            <AlignTopIcon />
            <AlignMiddleIcon />
            <AlignBottomIcon />
          </div>
        </section>
        <section>
          <h3 className={headingClass}>CENTER</h3>
          <div className="grid w-max grid-cols-2 gap-x-[15px] gap-y-[22px] pl-px pt-[23px]">
            <CenterVerticalIcon />
            <CenterHorizontalIcon />
            <CenterBothIcon />
          </div>
        </section>
        <section className="pt-[15px]">
          <h3 className={headingClass}>MATCH SIZE</h3>
          <div className="flex gap-[15px] pl-px pt-[22px] text-[#b4b4b4]">
            <MatchHeightIcon />
            <MatchWidthIcon />
            <MatchBothIcon />
          </div>
        </section>
        <section className="pt-[15px]">
          <h3 className={headingClass}>DISTRIBUTE</h3>
          <div className="flex gap-[15px] pl-px pt-[22px] text-[#b4b4b4]">
            <DistributeHorizontalIcon />
            <DistributeVerticalIcon />
          </div>
        </section>
      </div>
      <button type="button" className="mt-[21px] flex items-center border-t border-[#c4c4c4] pb-[23px] pt-6 text-base">
        <ToolsIcon />
        <span className="flex-1 pl-3 text-left text-[#5a5a5a]">More</span>
        <span className="mr-3"><Caret /></span>
      </button>
      <div className="flex h-10 items-center">
        <h3 className={`flex-1 ${headingClass}`}>FIELDS</h3>
        <button type="button" aria-label="Order fields" className="flex items-center gap-0.5">
          <OrderIcon />
          <Caret />
        </button>
        <button type="button" aria-label="Sort fields" className="ml-[18px] mr-2.5 flex items-center gap-2">
          <span className="flex flex-col font-['Liberation_Sans',sans-serif] text-sm font-bold leading-[13px]">
            <span>A</span>
            <span>Z</span>
          </span>
          <Caret />
        </button>
      </div>
      <div className="-ml-2.5 pt-2.5 text-base leading-6 text-[#555]">
        <div className="flex h-[38px] items-center">
          <Svg w={15} h={10}><path d="M1 1.500l6.500 6.500L14 1.500" strokeWidth={2.200} /></Svg>
          <span className="pl-[11px]"><PageFormIcon /></span>
          <span className="pl-[7px]">Page 1</span>
        </div>
        <ul className="pl-[43px]">
          {TREE.map((f) => (
            <li key={f.name} className="flex h-[38px] items-center gap-1">
              {f.date ? <DateIcon small /> : <TextFieldIcon small />}
              <span className={f.date ? 'bg-[#e4e4e4] px-0.5 py-1 text-[#1a1a1a]' : 'px-0.5'}>{f.name}</span>
            </li>
          ))}
        </ul>
      </div>
      <div className="mb-[26px] ml-1 mr-[7px] mt-auto flex flex-col gap-3 text-[17px] font-semibold text-[#555]">
        <button type="button" className="h-[39px] rounded-full border border-[#4a4a4a]">Distribute...</button>
        <button type="button" className="h-[39px] rounded-full border border-[#4a4a4a]">Track...</button>
      </div>
    </aside>
  );
}

export default function App() {
  return (
    <div className="relative flex h-screen flex-col overflow-hidden bg-[#fafafa] font-['Open_Sans',sans-serif]">
      <TitleBar />
      <TabBar />
      <MainToolbar />
      <FormToolbar />

      <main className="flex min-h-0 flex-1">
        <button type="button" aria-label="Show navigation pane" className="flex w-[22px] shrink-0 items-center justify-center bg-[#e8e8e8] text-[#5a5a5a]">
          <Svg w={8} h={14}><path d="M0 0v14l7-7z" fill="currentColor" stroke="none" /></Svg>
        </button>
        <div className="flex min-w-0 flex-1 justify-center overflow-hidden bg-[#999899] pr-px">
          <DocumentPage />
        </div>
        <ScrollBar />
        <button type="button" aria-label="Hide tools pane" className="flex w-[21px] shrink-0 items-center justify-center bg-[#e8e8e8] text-[#5a5a5a]">
          <Svg w={8} h={14}><path d="M0 0v14l7-7z" fill="currentColor" stroke="none" /></Svg>
        </button>
        <SidePanel />
        <nav className="grid h-[714px] w-[57px] shrink-0 grid-rows-12">
          {RAIL.map((r) => (
            <button
              key={r.label}
              type="button"
              aria-label={r.label}
              className={`flex items-center justify-center ${r.active ? 'bg-[#c038cc]' : ''}`}
            >
              {r.icon}
            </button>
          ))}
        </nav>
      </main>

      {/* sliver of the taskbar */}
      <div className="flex h-[5px] shrink-0 bg-black">
        <div className="ml-[60px] w-[430px] bg-[#f0f0f0]" />
        <div className="ml-[680px] w-[168px] bg-[#333]" />
        <div className="ml-[170px] w-[168px] bg-[#a0591f]" />
      </div>

      {/* arrow pointing at the Preview button */}
      <svg width="190" height="150" viewBox="0 0 190 150" className="pointer-events-none absolute right-[240px] top-[200px]" fill="none" stroke="#aaa8ff" strokeWidth={20} aria-hidden="true">
        <path d="M11 135 158 32" />
        <path d="M122 18l49 2-15 47" strokeLinecap="round" strokeLinejoin="round" />
      </svg>
    </div>
  );
}
